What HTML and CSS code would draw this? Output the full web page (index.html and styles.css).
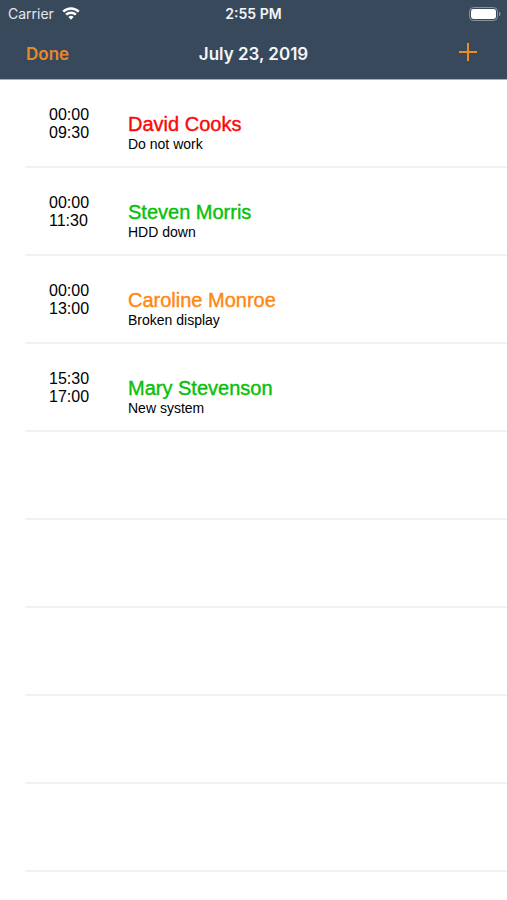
FILE: index.html
```html
<!DOCTYPE html>
<html lang="en">
<head>
<meta charset="utf-8">
<meta name="viewport" content="width=device-width, initial-scale=1">
<title>July 23, 2019</title>
<link rel="stylesheet" href="styles.css">
</head>
<body>
<header class="top">
  <div class="status">
    <div class="carrier">
      <span>Carrier</span>
      <svg class="wifi" viewBox="0 0 18 13" aria-hidden="true">
        <path d="M1.2 4.6a11.2 11.2 0 0 1 15.6 0M4.1 7.7a7 7 0 0 1 9.8 0"/>
        <path class="wifi-dot" d="M6.4 10a3.8 3.8 0 0 1 5.2 0L9 12.8z"/>
      </svg>
    </div>
    <span class="clock">2:55 PM</span>
    <svg class="battery" viewBox="0 0 32 14" aria-hidden="true">
      <rect class="battery-case" x="0.5" y="0.5" width="28" height="13" rx="4"/>
      <rect class="battery-fill" x="2" y="2" width="25" height="10" rx="2.4"/>
      <path class="battery-tip" d="M30 4.8c2 .6 2 3.8 0 4.4z"/>
    </svg>
  </div>
  <nav class="bar">
    <button class="done" type="button">Done</button>
    <h1 class="title">July 23, 2019</h1>
    <button class="add" type="button" aria-label="Add">
      <svg class="plus" viewBox="0 0 18 18" aria-hidden="true"><path d="M9 0v18M0 9h18"/></svg>
    </button>
  </nav>
</header>
<main>
  <ul class="list">
    <li class="row">
      <div class="times"><time>00:00</time><time>09:30</time></div>
      <div class="info"><h2 class="name red">David Cooks</h2><p class="note">Do not work</p></div>
    </li>
    <li class="row">
      <div class="times"><time>00:00</time><time>11:30</time></div>
      <div class="info"><h2 class="name green">Steven Morris</h2><p class="note">HDD down</p></div>
    </li>
    <li class="row">
      <div class="times"><time>00:00</time><time>13:00</time></div>
      <div class="info"><h2 class="name orange">Caroline Monroe</h2><p class="note">Broken display</p></div>
    </li>
    <li class="row">
      <div class="times"><time>15:30</time><time>17:00</time></div>
      <div class="info"><h2 class="name green">Mary Stevenson</h2><p class="note">New system</p></div>
    </li>
    <li class="row"></li>
    <li class="row"></li>
    <li class="row"></li>
    <li class="row"></li>
    <li class="row"></li>
  </ul>
</main>
</body>
</html>
```
FILE: styles.css
```css
* {
  box-sizing: border-box;
}

body {
  margin: 0;
  background: #fff;
  color: #000;
  font-family: "Liberation Sans", Arial, sans-serif;
}

h1, h2, p, ul {
  margin: 0;
  padding: 0;
}

button {
  padding: 0;
  border: 0;
  background: none;
  color: #e6892c;
  font: inherit;
}

.top {
  background: #38495c;
  border-bottom: 1px solid #9fb3bf;
  color: #f4f6f8;
  font-family: Inter, sans-serif;
}

.status,
.bar {
  display: grid;
  grid-template-columns: 1fr auto 1fr;
  align-items: center;
}

.status {
  height: 27px;
  padding: 0 6px;
  font-size: 14px;
}

.carrier {
  display: flex;
  align-items: center;
  gap: 8px;
  padding-left: 2px;
  color: #e3e8ed;
}

.wifi {
  width: 18px;
  height: 13px;
  fill: none;
  stroke: #fff;
  stroke-width: 2.4;
}

.wifi-dot {
  fill: #fff;
  stroke: none;
}

.clock {
  font-weight: 600;
}

.battery {
  justify-self: end;
  width: 32px;
  height: 14px;
}

.battery-case {
  fill: none;
  stroke: #8893a0;
}

.battery-fill {
  fill: #fff;
}

.battery-tip {
  fill: #8893a0;
}

.bar {
  height: 52px;
  padding: 2px 26px 0;
  font-size: 17px;
}

.done {
  justify-self: start;
  font-weight: 600;
}

.title {
  font-size: 17px;
  font-weight: 600;
}

.add {
  justify-self: end;
  display: flex;
  padding: 0 4px 4px;
}

.plus {
  width: 18px;
  height: 18px;
  fill: none;
  stroke: #f08c1e;
  stroke-width: 2;
}

.list {
  list-style: none;
  padding-left: 25px;
}

.row {
  display: flex;
  height: 88px;
  padding-left: 24px;
  border-bottom: 2px solid #f1f1f1;
}

.times {
  display: flex;
  flex-direction: column;
  width: 79px;
  padding-top: 26px;
  font-size: 16px;
  line-height: 18px;
}

.info {
  padding-top: 32px;
}

.name {
  font-size: 20px;
  font-weight: 400;
  line-height: 24px;
  -webkit-text-stroke: 0.4px currentColor;
}

.note {
  font-size: 14px;
  line-height: 16px;
}

.red {
  color: #fa0a0a;
}

.green {
  color: #0abf0a;
}

.orange {
  color: #ff8710;
}
```
